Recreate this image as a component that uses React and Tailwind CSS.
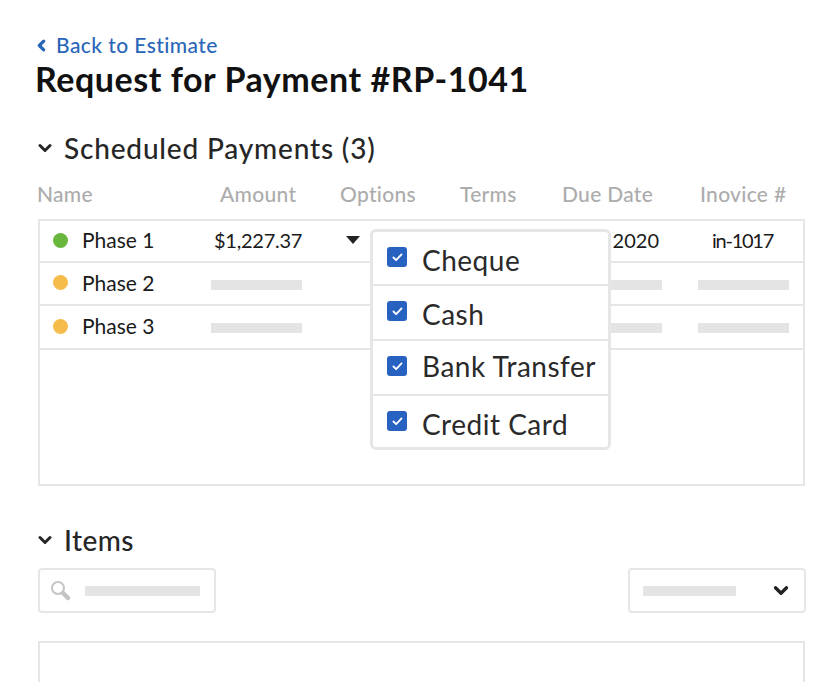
import React from "react";

const font = { fontFamily: '"Lato", sans-serif' };

function Chevron({ className }) {
  return (
    <svg viewBox="0 0 14 10" className={className} fill="none" stroke="currentColor" strokeWidth="3" strokeLinecap="round" strokeLinejoin="round">
      <path d="M2 2.5 7 7.5 12 2.5" />
    </svg>
  );
}

function Bar({ className }) {
  return <div className={"h-[10px] bg-[#e4e4e4] " + className} />;
}

function Check({ label, className, boxClass, textClass }) {
  return (
    <div className={"flex items-start pl-[14px] border-[#e6e6e6] " + className}>
      <div className={"w-5 h-5 rounded-[3px] bg-[#2862c1] flex items-center justify-center shrink-0 " + boxClass}>
        <svg viewBox="0 0 12 10" className="w-[11px] h-[9px]" fill="none" stroke="#fff" strokeWidth="2" strokeLinecap="round" strokeLinejoin="round">
          <path d="M1.5 5 4.5 8 10.5 1.5" />
        </svg>
      </div>
      <span className={"ml-[15px] text-[28px] leading-[34px] text-[#2a2a2a] whitespace-nowrap tracking-[0.5px] " + textClass}>{label}</span>
    </div>
  );
}

const grid = "grid grid-cols-[175px_125px_120px_104px_122px_1fr]";

export default function App() {
  return (
    <div className="w-[840px] h-[682px] overflow-hidden bg-white pl-[37px] pr-[34px] pt-[33px]" style={font}>
      <div className="flex items-center h-6 text-[#2a66b8] text-[21px] font-medium tracking-[0.42px]">
        <svg viewBox="0 0 8 12" className="w-[9px] h-[13px] mr-[10px]" fill="none" stroke="currentColor" strokeWidth="3" strokeLinecap="round" strokeLinejoin="round">
          <path d="M6 2 2 6 6 10" />
        </svg>
        Back to Estimate
      </div>
      <h1 className="mt-[2px] -ml-[2px] text-[34px] leading-[40px] font-bold text-[#111] tracking-[0.55px] whitespace-nowrap">Request for Payment #RP-1041</h1>

      <div className="mt-[32px] flex items-center h-[34px] text-[#262626]">
        <Chevron className="w-[14px] h-[10px] ml-[1px] mr-[12px]" />
        <span className="text-[28px] font-medium tracking-[0.82px] whitespace-nowrap">Scheduled Payments (3)</span>
      </div>

      <div className={grid + " mt-[13px] h-6 items-center text-[21px] text-[#acacac] font-medium tracking-[0.3px] whitespace-nowrap"}>
        <span>Name</span>
        <span className="pl-[8px]">Amount</span>
        <span className="pl-[3px]">Options</span>
        <span className="pl-[3px]">Terms</span>
        <span className="pl-[1px]">Due Date</span>
        <span className="pl-[17px]">Inovice #</span>
      </div>

      <div className="relative mt-[17px] ml-[1px] w-[767px] h-[267px] border-2 border-[#e6e6e6]">
        <div className={grid + " h-[42px] pb-[2px] items-center border-b-2 border-[#e6e6e6] text-[20px] text-[#1a1a1a] whitespace-nowrap"}>
          <div className="flex items-center pl-[13px] text-[21px]">
            <span className="w-[15px] h-[15px] rounded-full bg-[#69b83d] mr-[14px]" />
            Phase 1
          </div>
          <span className="-ml-[1px] tracking-[-0.25px]">$1,227.37</span>
          <svg viewBox="0 0 14 8" className="w-[14px] h-[8px] ml-[6px]">
            <path d="M0 0H14L7 8Z" fill="#222" />
          </svg>
          <span />
          <span className="text-right pr-[27px]">2020</span>
          <span className="pl-[26px] tracking-[-1.25px]">in-1017</span>
        </div>
        {["Phase 2", "Phase 3"].map((p, i) => (
          <div key={p} className={grid + (i === 0 ? " h-[43px]" : " h-[44px]") + " pb-[2px] items-center border-b-2 border-[#e6e6e6] text-[21px] text-[#1a1a1a] whitespace-nowrap"}>
            <div className="flex items-center pl-[13px]">
              <span className="w-[15px] h-[15px] rounded-full bg-[#f5bb4b] mr-[14px]" />
              {p}
            </div>
            <Bar className="w-[91px] -ml-[4px] mt-[4px]" />
            <span />
            <span />
            <div className="flex justify-end pr-[24px]"><Bar className="w-[60px] mt-[4px]" /></div>
            <Bar className="w-[91px] ml-[12px] mt-[4px]" />
          </div>
        ))}

        <div className="absolute left-[330px] top-[8px] w-[241px] h-[221px] bg-white border-[3px] border-[#e6e6e6] rounded-[6px] overflow-hidden">
          <Check label="Cheque" className="h-[54px] border-b-2" boxClass="mt-[15px]" textClass="mt-[11px]" />
          <Check label="Cash" className="h-[55px] border-b-2" boxClass="mt-[15px]" textClass="mt-[11px]" />
          <Check label="Bank Transfer" className="h-[55px] border-b-2" boxClass="mt-[15px]" textClass="mt-[8px]" />
          <Check label="Credit Card" className="h-[52px]" boxClass="mt-[15px]" textClass="mt-[11px]" />
        </div>
      </div>

      <div className="mt-[37px] flex items-center h-[34px] text-[#262626]">
        <Chevron className="w-[14px] h-[10px] ml-[1px] mr-[12px]" />
        <span className="text-[28px] font-medium tracking-[0.45px]">Items</span>
      </div>

      <div className="mt-[11px] ml-[1px] w-[768px] flex justify-between">
        <div className="w-[178px] h-[45px] border-2 border-[#e6e6e6] rounded-[4px] flex items-center pl-[10px]">
          <svg viewBox="0 0 22 22" className="w-[22px] h-[22px] shrink-0" fill="none">
            <circle cx="8" cy="8" r="6" stroke="#c4c4c4" strokeWidth="2" />
            <path d="M13 13 18 18" stroke="#c4c4c4" strokeWidth="4.5" strokeLinecap="round" />
          </svg>
          <Bar className="ml-[13px] w-[115px]" />
        </div>
        <div className="w-[178px] h-[45px] border-2 border-[#e6e6e6] rounded-[4px] flex items-center pl-[13px]">
          <Bar className="w-[93px]" />
          <Chevron className="w-[16px] h-[11px] ml-[37px] text-[#222]" />
        </div>
      </div>

      <div className="mt-[28px] ml-[1px] w-[767px] h-[60px] border-2 border-[#e6e6e6]" />
    </div>
  );
}
